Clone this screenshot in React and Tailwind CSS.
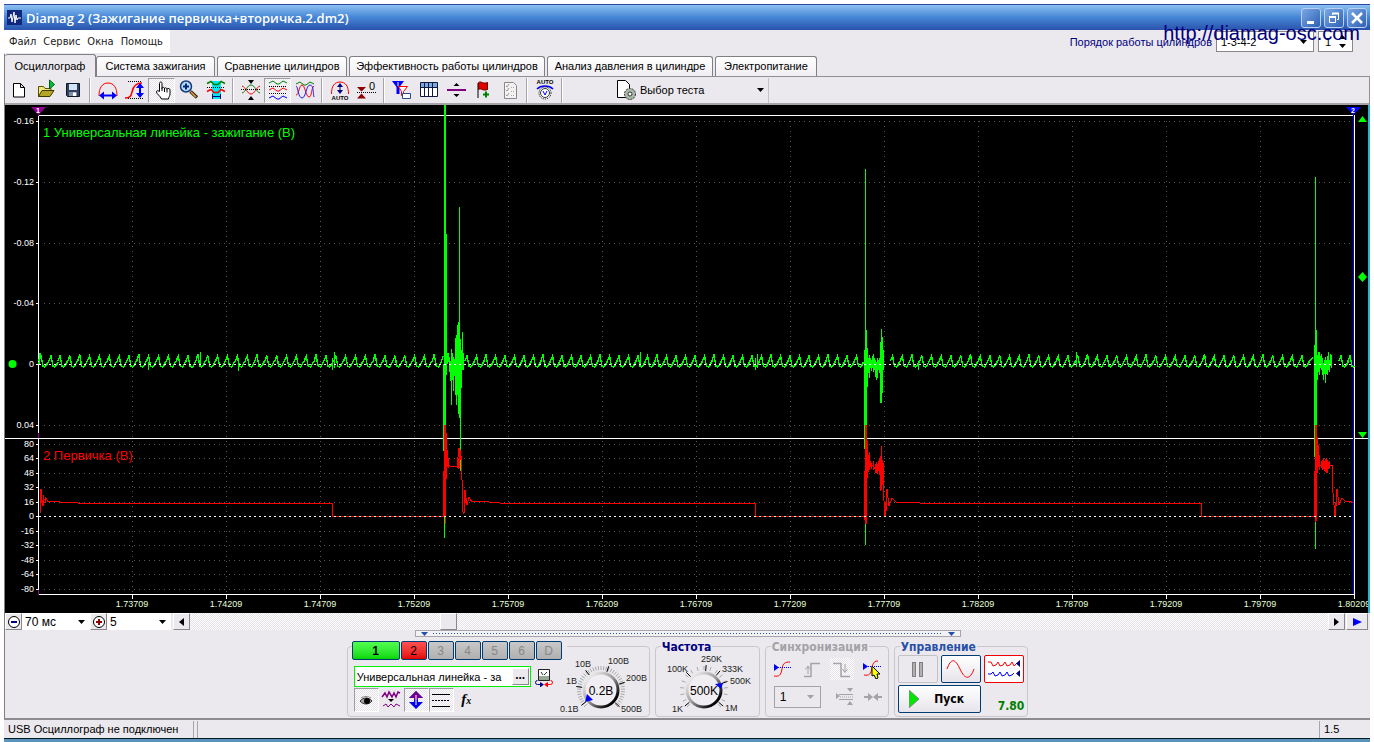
import React from "react";

const UI = "font-['Liberation_Sans',sans-serif]";
const CHECKER =
  "bg-[repeating-conic-gradient(#ffffff_0_25%,#e4e2e8_0_50%)] bg-[length:2px_2px]";

/* ---------- toolbar ---------- */

function Icon({ children, size = 24 }) {
  return (
    <svg width={size} height={size} viewBox={`0 0 ${size} ${size}`} fill="none" aria-hidden="true" className="shrink-0">
      {children}
    </svg>
  );
}

const toolbar = [
  [
    { name: "Новый", icon: <path d="M6.5 5.5h7l4 4v9.500h-11zM13.500 5.500v4h4" fill="#fff" stroke="#000" /> },
    {
      name: "Открыть",
      icon: (
        <>
          <path d="M4.500 18.500v-10h5l1.500 2h6v3" fill="#f4e77a" stroke="#5a5300" />
          <path d="M4.500 18.500l3.500-6h12l-4 6z" fill="#b3a526" stroke="#3d3800" />
          <path d="M15.500 2l5 4.500-5 4.500z" fill="#00c040" stroke="#006010" />
        </>
      ),
    },
    {
      name: "Сохранить",
      icon: (
        <>
          <path d="M5.500 5.500h13v13h-12l-1-1z" fill="#31415f" stroke="#101828" />
          <path d="M8 6h8v6H8z" fill="#d4e4f8" />
          <path d="M8 14h8v4H8z" fill="#8090a8" />
          <path d="M12 14.500h3v3.500h-3z" fill="#fff" />
        </>
      ),
    },
  ],
  [
    {
      name: "Период",
      icon: (
        <>
          <path d="M3 18c0-8 3-13 9-13s9 5 9 13" stroke="#f00" />
          <path d="M5 17.500h14" stroke="#00f" strokeWidth="2" />
          <path d="M3 17.500l5-4v8zM21 17.500l-5-4v8z" fill="#00f" />
        </>
      ),
    },
    {
      name: "Амплитуда",
      icon: (
        <>
          <path d="M2 20c4 0 6-1 7-6s3-9 10-9" stroke="#f00" strokeWidth="1.500" />
          <path d="M5 3.500h14M5 20.500h16" stroke="#000" strokeDasharray="1 1" />
          <path d="M17 7v11" stroke="#00f" strokeWidth="2" />
          <path d="M17 5l-4 5h8zM17 20l-4-5h8z" fill="#00f" />
        </>
      ),
    },
    {
      name: "Рука",
      pressed: true,
      icon: (
        <path
          d="M9.500 13.500v-8c0-2 2.500-2 2.500 0v5c0-2 2.500-1.500 2.500 0.500 0-2 2.500-1.500 2.500 0.500 0-1.500 3-1.500 3 0.500v4c0 2-1.500 3-1.500 5h-7c-1-3-5-5-5-7s2-1.500 3 0M12 10v3M14.500 11v3M17 11.500v3"
          fill="#fff"
          stroke="#000"
        />
      ),
    },
    {
      name: "Лупа",
      icon: (
        <>
          <path d="M13.500 13.500l6.500 6" stroke="#3b2c10" strokeWidth="3.500" />
          <path d="M14 14l5 5" stroke="#d8a040" strokeWidth="1.500" />
          <circle cx="9" cy="8.500" r="5.500" fill="#b8dcff" stroke="#183878" strokeWidth="1.500" />
          <path d="M6 8.500h6M9 5.500v6" stroke="#002878" strokeWidth="2" />
        </>
      ),
    },
    {
      name: "Участок",
      icon: (
        <>
          <path d="M8 3h9v18H8z" fill="#00e8f0" />
          <path d="M3 5.500l4-2 3 3h4l3-3 4 2" stroke="#008000" strokeWidth="1.500" />
          <path d="M3 9.500h18" stroke="#000" strokeDasharray="1 1" />
          <path d="M3 13.500l4-2 3 3h4l3-3 4 2" stroke="#f00" strokeWidth="1.500" />
          <path d="M8.500 16v5M16.500 16v5M9 18.500h7" stroke="#000080" />
        </>
      ),
    },
  ],
  [
    {
      name: "Центрировать",
      icon: (
        <>
          <path d="M3 15c4-1 5-8 9-8s5 7 9 8" stroke="#008000" />
          <path d="M3 8c4 1 5 8 9 8s5-7 9-8" stroke="#f00" />
          <path d="M2 11.500h20" stroke="#000" strokeDasharray="1 1" />
          <path d="M9 2h6l-3 4zM9 22h6l-3-4z" fill="#000" />
        </>
      ),
    },
    {
      name: "Раздельно",
      pressed: true,
      icon: (
        <>
          <path d="M3 5l4-2 4 3h2l4-3 4 2" stroke="#008000" />
          <path d="M3 12l4-2 4 3h2l4-3 4 2" stroke="#f00" />
          <path d="M3 20l4-2 4 3h2l4-3 4 2" stroke="#00f" />
          <path d="M3 8.500h18M3 15.500h18" stroke="#000" strokeDasharray="1 1" />
        </>
      ),
    },
    {
      name: "Вместе",
      icon: (
        <>
          <path d="M3 6l4-2 4 3h2l4-3 4 2" stroke="#008000" />
          <path d="M3 17c3 0 3-10 6-10s4 12 7 12 2-9 5-11" stroke="#f00" />
          <path d="M3 8c2 0 2 12 6 12s4-13 8-13 3 10 4 12" stroke="#22f" />
        </>
      ),
    },
  ],
  [
    {
      name: "Авто амплитуда",
      icon: (
        <>
          <path d="M3.500 16c0-8 3-12 8.500-12s8.500 4 8.500 12" stroke="#f00" />
          <path d="M12 7v7" stroke="#000080" />
          <path d="M12 5l-3 4h6zM12 16l-3-4h6z" fill="#000080" />
          <text x="12" y="22" textAnchor="middle" fontSize="6" fontWeight="700" fill="#000" fontFamily="Liberation Sans, sans-serif">AUTO</text>
        </>
      ),
    },
    {
      name: "Установить ноль",
      icon: (
        <>
          <path d="M2 9h9l-4.500 4.500zM2 20.500h9l-4.500-5z" fill="#900000" />
          <path d="M2 14.500h19" stroke="#000" strokeDasharray="1 1" />
          <text x="14" y="12" fontSize="11" fill="#000" fontFamily="Liberation Sans, sans-serif">0</text>
        </>
      ),
    },
  ],
  [
    {
      name: "Маркеры",
      icon: (
        <>
          <path d="M2 3h12L9.500 9v7h-3V9z" fill="#00f" />
          <path d="M8.500 8.500h9l-4 5v4h-2v-4z" fill="#fff" stroke="#f00" />
          <path d="M12.500 15.500h8v5h-8z" fill="#fff" stroke="#304890" />
          <path d="M8 4v4M14.500 18h4" stroke="#fff" />
        </>
      ),
    },
    {
      name: "Таблица",
      icon: (
        <>
          <path d="M3.500 4.500h17v14h-17z" fill="#fff" stroke="#101840" />
          <path d="M4 5h16v4H4z" fill="#7aa8e0" />
          <path d="M3.500 9.500h17M7.500 5v14M11.500 5v14M15.500 5v14" stroke="#101840" />
        </>
      ),
    },
    {
      name: "Линия",
      icon: (
        <>
          <path d="M3 12h19" stroke="#800080" strokeWidth="2" />
          <path d="M9.500 8h6l-3-3zM9.500 16h6l-3 3z" fill="#000" />
        </>
      ),
    },
    {
      name: "Флаг",
      icon: (
        <>
          <path d="M7 5v15" stroke="#000" />
          <path d="M7.500 4.500c3-2 4 2 9 0v7c-5 2-6-2-9 0z" fill="#e00000" stroke="#700000" />
          <path d="M12 16.500h6M15 13.500v6" stroke="#008000" strokeWidth="2" />
        </>
      ),
    },
    {
      name: "Список",
      icon: (
        <>
          <path d="M6.500 4.500h9l3 3v13h-12z" fill="#f2f2f2" stroke="#888" />
          <path d="M8 8l1 1 2-3M8 12l1 1 2-3M8 17l1 1 2-3" stroke="#999" />
          <path d="M13 9.500h3M13 13.500h3M13 17.500h3" stroke="#aaa" strokeDasharray="1 1" />
        </>
      ),
    },
  ],
  [
    {
      name: "Авто прибор",
      icon: (
        <>
          <text x="12" y="6" textAnchor="middle" fontSize="6" fontWeight="700" fill="#000" fontFamily="Liberation Sans, sans-serif">AUTO</text>
          <path d="M4 11c4-4 12-4 16 0" stroke="#00f" strokeWidth="1.500" />
          <circle cx="12" cy="15" r="6" fill="#fff" stroke="#000" strokeDasharray="1 1" />
          <circle cx="12" cy="15" r="4.500" fill="#fff" stroke="#333" />
          <path d="M10 13l2 4 2-4" stroke="#00f" />
        </>
      ),
    },
  ],
];

const Separator = () => (
  <div className="flex h-[25px] w-2 shrink-0 justify-center">
    <div className="w-[2px] border-r border-white bg-[#a6a4a9]" />
  </div>
);

function ToolButton({ name, pressed, children }) {
  return (
    <button
      type="button"
      aria-label={name}
      aria-pressed={!!pressed}
      className={`flex h-[25px] w-[27px] shrink-0 items-center justify-center ${
        pressed ? `border border-t-[#9d9da1] border-l-[#9d9da1] border-r-white border-b-white ${CHECKER}` : ""
      }`}
    >
      {children}
    </button>
  );
}

/* ---------- chart data ---------- */

function cycles(from, to, step) {
  const peaks = [];
  for (let x = from; x <= to; x += step) peaks.push(x);
  return peaks;
}

function sparkWave(peaks) {
  return (
    "M" +
    peaks
      .map((p, i) => {
        const top = i % 6 === 2 ? 354 : 356;
        return `${p - 2} 361L${p} ${top}L${p + 1} 361L${p + 2} 366L${p + 4} 367L${p + 5} 366L${p + 7} 362`;
      })
      .join("L")
  );
}

const strokes = (list) => list.map(([x, a, b]) => `M${x}.5 ${a}V${b}`).join("");

const greenBase = [
  "M39 364L40 353" + sparkWave([41, 51]).replace("M", "L"),
  sparkWave(cycles(60, 440, 9.85)) + "L443 356",
  sparkWave(cycles(467, 859, 9.5)),
  sparkWave(cycles(892.5, 1308, 9.75)) + "L1313 357",
  sparkWave([1341, 1350]).replace(/L1357 362$/, ""),
].join("");

const greenSpikes = strokes([
  [200, 352, 367], [238, 362, 371], [334, 352, 368], [332, 358, 370], [148, 362, 370],
  [757, 354, 368], [755, 358, 370], [918, 362, 370], [1076, 352, 367], [640, 352, 367],
  [443, 364, 451], [444, 105, 538], [445, 105, 425], [446, 234, 375], [447, 353, 364], [448, 353, 362],
  [449, 357, 372], [450, 361, 381], [451, 349, 405], [452, 353, 380], [453, 357, 391], [454, 359, 376],
  [455, 338, 395], [456, 335, 405], [457, 325, 395], [458, 322, 414], [459, 207, 418], [460, 339, 471],
  [461, 350, 388], [462, 332, 370], [463, 353, 370],
  [864, 350, 449], [865, 169, 545], [866, 330, 425], [867, 348, 387], [868, 358, 373], [869, 355, 378],
  [870, 358, 368], [871, 360, 371], [872, 356, 368], [873, 354, 372], [874, 358, 370], [875, 360, 377],
  [876, 362, 380], [877, 358, 378], [878, 360, 370], [879, 358, 373], [880, 342, 403], [881, 329, 403],
  [882, 337, 393], [883, 350, 370],
  [1314, 345, 457], [1315, 177, 549], [1316, 330, 425], [1317, 355, 380], [1318, 352, 372], [1319, 352, 375],
  [1320, 356, 368], [1321, 354, 370], [1322, 358, 375], [1323, 363, 380], [1324, 360, 374], [1325, 357, 383],
  [1326, 360, 374], [1327, 356, 375], [1328, 352, 370], [1329, 360, 372], [1330, 354, 366], [1331, 355, 368],
]);

const redLine =
  "M40 513V495L41 489L42 500L43 506L44 500L46 498L48 502L52 501L60 502L78 503H332V516H444" +
  "M447 452L448 464L450 466H457L459 448L461 456L462 480L463 512L464 514L465 490L467 505L469 497L472 502L478 501L500 503H755V516H865" +
  "M868 459L870 464L873 466L876 470L880 460L882 462L883 485L885 516L887 489L889 506L892 498L896 502L920 503H1201V516H1315" +
  "M1317 446L1318 460L1320 465H1332L1333 493L1335 516L1337 489L1339 505L1342 498L1346 502L1350 501L1353 503";

const redSpikes = strokes([
  [40, 493, 513], [41, 489, 503], [43, 495, 506], [45, 497, 503],
  [443, 471, 516], [444, 425, 517], [445, 425, 524], [446, 433, 479], [447, 450, 467], [448, 458, 468],
  [457, 461, 468], [458, 458, 469], [459, 448, 468], [460, 450, 470], [461, 456, 480], [464, 501, 510],
  [465, 490, 503],
  [864, 471, 520], [865, 425, 524], [866, 425, 524], [867, 441, 478], [868, 455, 472], [869, 452, 470],
  [870, 461, 467], [871, 463, 469], [873, 461, 470], [875, 464, 473], [876, 462, 473], [877, 464, 474],
  [878, 461, 471], [879, 458, 475], [880, 456, 491], [881, 446, 490], [882, 460, 480], [883, 463, 486],
  [885, 506, 516], [886, 491, 511],
  [1314, 471, 516], [1315, 425, 522], [1316, 425, 521], [1317, 437, 473], [1318, 445, 467], [1319, 455, 470],
  [1321, 461, 468], [1322, 460, 470], [1323, 458, 469], [1324, 461, 471], [1325, 459, 472], [1326, 458, 473],
  [1327, 460, 473], [1328, 462, 469], [1329, 461, 468], [1336, 489, 506],
]);

const topScale = [["-0.16", 121], ["-0.12", 182], ["-0.08", 243], ["-0.04", 303], ["0", 364], ["0.04", 425]];
const bottomScale = [
  ["80", 444], ["64", 458], ["48", 473], ["32", 487], ["16", 502], ["0", 516],
  ["-16", 531], ["-32", 545], ["-48", 560], ["-64", 574], ["-80", 589],
];
const timeScale = [
  "1.73709", "1.74209", "1.74709", "1.75209", "1.75709", "1.76209", "1.76709",
  "1.77209", "1.77709", "1.78209", "1.78709", "1.79209", "1.79709", "1.80209",
];

function Oscillogram() {
  const scale = [...topScale, ...bottomScale];
  return (
    <svg
      viewBox="5 105 1363 508"
      className="block w-full bg-black"
      role="img"
      aria-label="Осциллограмма"
      fill="none"
      fontFamily="Liberation Sans, sans-serif"
    >
      <g shapeRendering="crispEdges">
        <g stroke="#585858" strokeDasharray="1 4">
          {scale.map(([, y], i) => (
            <path key={i} d={`M44 ${y}.5H1353`} />
          ))}
          {timeScale.slice(0, 13).map((t, i) => (
            <path key={t} d={`M${132 + i * 94}.5 121V594`} />
          ))}
        </g>
        <path d="M39 115.500H1355M38.500 115V595M38 594.500H1355M5 438.500H1368M1354.500 115V595" stroke="#fff" />
        <path d="M1353.500 112V594" stroke="#0000ff" />
        <path d="M38.500 112V116M38.500 433V438M38.500 589V595" stroke="#900090" />
        <path d={scale.map(([, y]) => `M36 ${y}.5h3`).join("")} stroke="#fff" />
        <path d={timeScale.map((t, i) => `M${132 + i * 94}.5 595v4`).join("")} stroke="#fff" />
      </g>
      <path d={greenBase} stroke="#00ff00" strokeWidth="1.400" shapeRendering="crispEdges" />
      <path d={greenSpikes} stroke="#00ff00" shapeRendering="crispEdges" />
      <path d={redLine} stroke="#ff0000" shapeRendering="crispEdges" />
      <path d={redSpikes} stroke="#ff0000" shapeRendering="crispEdges" />
      <path d="M460.500 460V471" stroke="#00ff00" />
      <path d="M39 364.500H1353M39 516.500H1353" stroke="#fff" strokeDasharray="2 3" shapeRendering="crispEdges" />

      <g fontSize="9" fill="#fff" textAnchor="end">
        {scale.map(([t, y], i) => (
          <text key={i} x="34" y={y + 3}>{t}</text>
        ))}
      </g>
      <g fontSize="9" fill="#e4ffd8" textAnchor="middle">
        {timeScale.map((t, i) => (
          <text key={t} x={132 + i * 94} y="607">{t}</text>
        ))}
      </g>
      <text x="43" y="137" fontSize="13" fill="#00ff00">1 Универсальная линейка - зажигание (В)</text>
      <text x="43" y="460" fontSize="13" fill="#ff0000">2 Первичка (В)</text>

      <path d="M31 107h15l-7.500 8z" fill="#900090" />
      <text x="38" y="113" fontSize="7" fontWeight="700" fill="#fff" textAnchor="middle">1</text>
      <path d="M1346 107h15l-7.500 8z" fill="#0000ff" />
      <text x="1353" y="113" fontSize="7" fontWeight="700" fill="#fff" textAnchor="middle">2</text>
      <circle cx="12.500" cy="364" r="4" fill="#00ff00" />
      <path d="M1358 122h9l-4.500-6zM1358 432h9l-4.500 6zM1358 277l4.500-5 4.500 5-4.500 5z" fill="#00ff00" />
    </svg>
  );
}

/* ---------- dials ---------- */

function Dial({ id, label, view, width, cx, value, marks, pointer, ticks }) {
  const cy = 690;
  return (
    <div className="shrink-0">
      <input type="range" aria-label={label} min="0" max="5" defaultValue="2" className="sr-only" />
      <svg width={width} height="64" viewBox={view} fill="none" fontFamily="Liberation Sans, sans-serif" aria-hidden="true">
        <defs>
          <linearGradient id={id} x1="0" y1="0" x2="1" y2="1">
            <stop offset="0.150" stopColor="#e6e6e6" />
            <stop offset="0.500" stopColor="#9a9a9a" />
            <stop offset="0.850" stopColor="#000" />
          </linearGradient>
        </defs>
        {Array.from({ length: ticks }, (_, i) => {
          const a = ((135 + (270 * i) / (ticks - 1)) * Math.PI) / 180;
          return (
            <line
              key={i}
              x1={cx + 20 * Math.cos(a)}
              y1={cy + 20 * Math.sin(a)}
              x2={cx + 24 * Math.cos(a)}
              y2={cy + 24 * Math.sin(a)}
              stroke="#a8a8a8"
            />
          );
        })}
        {marks.map(([t, x, y, deg]) => {
          const a = (deg * Math.PI) / 180;
          return (
            <g key={t}>
              <line
                x1={cx + 19 * Math.cos(a)}
                y1={cy + 19 * Math.sin(a)}
                x2={cx + 25 * Math.cos(a)}
                y2={cy + 25 * Math.sin(a)}
                stroke="#000"
              />
              <text x={x} y={y} fontSize="9" fill="#222">{t}</text>
            </g>
          );
        })}
        <circle cx={cx} cy={cy} r="17" fill="#f0eef2" stroke={`url(#${id})`} strokeWidth="3" />
        <path d={pointer} fill="#0000f0" />
        <text x={cx} y={cy + 5} fontSize="12" textAnchor="middle" fill="#000">{value}</text>
      </svg>
    </div>
  );
}

/* ---------- control panel ---------- */

function Group({ title, color, width, children }) {
  return (
    <fieldset className={`h-[77px] shrink-0 rounded border border-[#c9c7cc] px-[3px] ${width}`}>
      <legend className={`ml-[2px] h-[12px] px-px font-['DejaVu_Sans_Condensed',sans-serif] text-[12px] leading-[14px] font-bold ${color}`}>
        {title}
      </legend>
      {children}
    </fieldset>
  );
}

function ChannelButton({ children, look }) {
  return (
    <button
      type="button"
      className={`h-[19px] rounded-[2px] border border-[#003c74] text-center text-[12px] leading-[16px] ${look}`}
    >
      {children}
    </button>
  );
}

const GreyButton = ({ name, checker, children }) => (
  <button type="button" aria-label={name} className={`flex h-[22px] w-[24px] items-center justify-center ${checker ? CHECKER : ""}`}>
    {children}
  </button>
);

const Toggle = ({ name, pressed, children }) => (
  <button
    type="button"
    aria-label={name}
    aria-pressed={!!pressed}
    className={`flex h-[24px] w-[25px] items-center justify-center ${
      pressed ? `border border-t-[#9d9da1] border-l-[#9d9da1] border-r-white border-b-white ${CHECKER}` : ""
    }`}
  >
    {children}
  </button>
);

const Caret = ({ color = "#000", className = "" }) => (
  <svg width="7" height="4" viewBox="0 0 7 4" className={`pointer-events-none shrink-0 ${className}`} aria-hidden="true">
    <path d="M0 0h7L3.500 4z" fill={color} />
  </svg>
);

const tabs = [
  ["Система зажигания", "w-[121px]"],
  ["Сравнение цилиндров", "w-[132px]"],
  ["Эффективность работы цилиндров", "w-[198px]"],
  ["Анализ давления в цилиндре", "w-[168px]"],
  ["Электропитание", "w-[104px]"],
];

const windowButton =
  "flex h-[20px] w-[20px] items-center justify-center rounded-[3px] border border-[#b8d0f4] bg-linear-to-br from-[#7aa8e4] to-[#3060b4]";

const raised = "flex shrink-0 items-center justify-center border border-t-white border-l-white border-r-[#8a888d] border-b-[#8a888d] bg-[#ebe9ed]";

export default function App() {
  return (
    <div className={`min-h-screen bg-white px-[4px] pt-[4px] text-[12px] leading-[14px] text-black ${UI}`}>
      <div className="relative bg-[#ebe9ed]">
        {/* title bar */}
        <header className="flex h-[26px] items-center border-t border-[#2848a0] bg-linear-to-b from-[#8cc0f0] via-[#4585d6] to-[#2a53ac] px-[3px]">
          <svg width="15" height="15" viewBox="0 0 15 15" aria-hidden="true">
            <path d="M0 0h15v15H0z" fill="#10287c" />
            <path d="M1 8h2l1-4 1 8 2-10 1 11 1-8 1 5 1-2h3" stroke="#fff" fill="none" />
          </svg>
          <h1 className="ml-[4px] flex-1 font-['Open_Sans',sans-serif] text-[13px] leading-[16px] font-semibold text-white">
            Diamag 2 (Зажигание первичка+вторичка.2.dm2)
          </h1>
          <div className="flex gap-[3px]">
            <button type="button" aria-label="Свернуть" className={windowButton}>
              <svg width="14" height="14" viewBox="0 0 14 14"><path d="M3 10h7v3H3z" fill="#fff" /></svg>
            </button>
            <button type="button" aria-label="Восстановить" className={windowButton}>
              <svg width="14" height="14" viewBox="0 0 14 14" fill="none" stroke="#fff">
                <path d="M5.500 4V2.500h6v6H10" /><path d="M5 2.500h7M2 6h7" strokeWidth="2" /><path d="M2.500 5.500h6v6h-6z" />
              </svg>
            </button>
            <button type="button" aria-label="Закрыть" className={windowButton}>
              <svg width="14" height="14" viewBox="0 0 14 14"><path d="M2 2l10 10M12 2L2 12" stroke="#fff" strokeWidth="2.500" /></svg>
            </button>
          </div>
        </header>

        {/* menu */}
        <div className="flex h-[24px] items-start justify-between pr-[17px]">
          <nav className="flex h-[23px] w-[166px] items-center gap-[7px] bg-white pl-[5px] font-['DejaVu_Sans_Condensed',sans-serif] text-[11px] text-[#222]">
            <a href="#file">Файл</a>
            <a href="#service">Сервис</a>
            <a href="#windows">Окна</a>
            <a href="#help">Помощь</a>
          </nav>
          <div className="flex items-center gap-[4px] pt-[1px] text-[11px]">
            <label htmlFor="order" className="text-[#000080]">Порядок работы цилиндров</label>
            <div className="flex h-[21px] w-[98px] items-center border border-[#888] bg-white pr-[6px]">
              <select id="order" className="min-w-0 flex-1 appearance-none pl-[4px]">
                <option>1-3-4-2</option>
              </select>
              <Caret />
            </div>
            <div className="flex h-[21px] w-[35px] items-center border border-[#888] bg-white pr-[6px]">
              <input aria-label="Цилиндр" defaultValue="1" className="w-0 min-w-0 flex-1 pl-[6px]" />
              <div className="flex flex-col gap-[5px]">
                <Caret className="rotate-180" />
                <Caret />
              </div>
            </div>
          </div>
        </div>
        <a href="http://diamag-osc.com" className="absolute top-[17px] right-[10px] text-[20px] leading-[24px] text-[#000080]">
          http://diamag-osc.com
        </a>

        <main className="border-l border-[#808080]">
          {/* tabs */}
          <div role="tablist" className="flex h-[23px] items-end border-b border-[#909094] text-[11px] whitespace-nowrap">
            <button type="button" role="tab" aria-selected="true" className="-mb-px h-[23px] w-[91px] shrink-0 rounded-t-[3px] border border-b-0 border-l-0 border-[#808084] bg-[#ebe9ed] leading-[20px]">
              Осциллограф
            </button>
            {tabs.map(([t, w]) => (
              <button key={t} type="button" role="tab" aria-selected="false" className={`h-[20px] shrink-0 pr-[2px] leading-[18px] ${w}`}>
                <span className="block h-[20px] rounded-t-[3px] border border-b-0 border-[#808084] bg-linear-to-b from-white to-[#f0eef2]">
                  {t}
                </span>
              </button>
            ))}
          </div>

          {/* toolbar */}
          <div className="flex h-[28px] items-center border-r border-b-2 border-r-[#909094] border-b-[#a6a4a9]" role="toolbar">
            {toolbar.map((group, i) => (
              <React.Fragment key={i}>
                {group.map((b) => (
                  <ToolButton key={b.name} name={b.name} pressed={b.pressed}>
                    <Icon>{b.icon}</Icon>
                  </ToolButton>
                ))}
                <Separator />
              </React.Fragment>
            ))}
            <button type="button" className="ml-[48px] flex h-[25px] w-[154px] items-center text-left text-[11px]">
              <Icon>
                <path d="M3.500 2.500h8l4 4v13h-12z" fill="#fff" stroke="#000" />
                <circle cx="16" cy="16" r="5.500" fill="#a8b8a8" stroke="#333" strokeDasharray="2 1" />
                <circle cx="16" cy="16" r="2" fill="#fff" stroke="#333" />
              </Icon>
              <span className="ml-[2px] flex-1">Выбор теста</span>
              <Caret className="mr-[4px]" />
            </button>
            <div className="h-[25px] w-px bg-[#c4c2c6]" />
          </div>

          <div className="border-r-2 border-[#30b0d0]">
            <Oscillogram />
          </div>

          {/* scroll row */}
          <div className="flex h-[17px] items-stretch">
            <button type="button" aria-label="Уменьшить" className={`w-[17px] ${raised}`}>
              <svg width="14" height="14" viewBox="0 0 14 14" fill="none"><circle cx="7" cy="7" r="5.500" fill="#fff" stroke="#000" /><path d="M4 7h6" stroke="#000080" strokeWidth="2" /></svg>
            </button>
            <div className="flex w-[68px] items-center bg-white pr-[5px]">
              <select aria-label="Развёртка" className="min-w-0 flex-1 appearance-none pl-[3px]"><option>70 мс</option></select>
              <Caret />
            </div>
            <button type="button" aria-label="Увеличить" className={`w-[17px] ${raised}`}>
              <svg width="14" height="14" viewBox="0 0 14 14" fill="none"><circle cx="7" cy="7" r="5.500" fill="#fff" stroke="#000" /><path d="M4 7h6M7 4v6" stroke="#900000" strokeWidth="2" /></svg>
            </button>
            <div className="flex w-[64px] items-center bg-white pr-[5px]">
              <select aria-label="Усиление" className="min-w-0 flex-1 appearance-none pl-[3px]"><option>5</option></select>
              <Caret />
            </div>
            <button type="button" aria-label="Влево" className={`ml-[2px] w-[17px] ${raised}`}>
              <svg width="5" height="8" viewBox="0 0 5 8"><path d="M5 0v8L0 4z" fill="#000" /></svg>
            </button>
            <div className={`flex flex-1 ${CHECKER}`}>
              <div className="w-[22%]" />
              <div className={`w-[17px] ${raised}`} />
            </div>
            <button type="button" aria-label="Вправо" className={`w-[17px] ${raised}`}>
              <svg width="5" height="8" viewBox="0 0 5 8"><path d="M0 0v8l5-4z" fill="#000" /></svg>
            </button>
            <button type="button" aria-label="Воспроизвести" className={`ml-[1px] mr-[2px] w-[22px] ${raised}`}>
              <svg width="9" height="8" viewBox="0 0 9 8"><path d="M0 0v8l9-4z" fill="#00f" /></svg>
            </button>
          </div>

          {/* splitter */}
          <div className="mx-auto flex h-[7px] w-[40%] items-center gap-[5px] border border-[#a8a6ab] bg-[#f2f1f4] px-[5px]">
            <Caret color="#2050a8" />
            <div className="h-px flex-1 bg-[repeating-linear-gradient(to_right,#2050a8_0_1px,transparent_1px_3px)]" />
            <Caret color="#2050a8" />
          </div>

          {/* control panel */}
          <section className="flex h-[81px] justify-center gap-[5px] pt-[3px]">
            <fieldset className="h-[77px] w-[303px] shrink-0 rounded border border-[#c9c7cc] pl-[4px]">
              <legend className="flex h-[12px] items-start gap-px pt-px pr-[5px]">
                <ChannelButton look="w-[48px] bg-linear-to-b from-[#50ff50] to-[#00d800] font-bold">1</ChannelButton>
                <ChannelButton look="w-[26px] bg-linear-to-b from-[#ff5050] to-[#e00000]">2</ChannelButton>
                {["3", "4", "5", "6", "D"].map((c) => (
                  <ChannelButton key={c} look="w-[26px] bg-linear-to-b from-[#c8c8c8] to-[#b0b0b0] text-[#888]">{c}</ChannelButton>
                ))}
              </legend>
              <div className="flex">
                <div className="w-[202px] shrink-0 pt-[14px] pl-[2px]">
                  <div className="flex items-center gap-[3px]">
                    <div className="flex h-[21px] w-[177px] items-center border border-[#00f000] bg-white pr-px">
                      <input aria-label="Название канала" defaultValue="Универсальная линейка - за" className="w-0 min-w-0 flex-1 pl-[2px] text-[11px]" />
                      <button type="button" className={`h-[17px] w-[17px] pb-[4px] leading-[8px] font-bold ${raised}`}>...</button>
                    </div>
                    <button type="button" aria-label="Датчик">
                      <Icon size={20}>
                        <path d="M4.500 2.500h11v11h-11z" fill="#fff" stroke="#222" />
                        <path d="M5 9h10v4H5z" fill="#98a898" />
                        <path d="M7 5l2 3M10 8l3-3" stroke="#333" />
                        <path d="M7 17.500H3.500a2 2 0 0 1 0-4" stroke="#000080" />
                        <path d="M6 15l4 2.500-4 3z" fill="#000080" />
                        <path d="M13 17.500h3.500a2 2 0 0 0 0-4" stroke="#f00" />
                        <path d="M14 15l-4 2.500 4 3z" fill="#f00" />
                      </Icon>
                    </button>
                  </div>
                  <div className="flex pt-px">
                    <Toggle name="Видимость" pressed>
                      <Icon size={20}>
                        <path d="M4 11c3-4 9-4 12 0-3 4-9 4-12 0z" fill="#a8a098" stroke="#333" />
                        <circle cx="11" cy="11" r="3" fill="#000" />
                        <path d="M5 8c3-2 7-2 10 0" stroke="#888" />
                      </Icon>
                    </Toggle>
                    <Toggle name="Фильтр">
                      <Icon size={20}>
                        <path d="M1 7l3-4 2 4 2-5 3 5 2-4 2 4 2-5 2 1" stroke="#800080" strokeWidth="1.500" />
                        <path d="M7 9h6l-3 3z" fill="#000" />
                        <path d="M2 16l3-2 2 3 3-3 3 3 2-3 4 2" stroke="#800080" />
                      </Icon>
                    </Toggle>
                    <Toggle name="Инверсия" pressed>
                      <Icon size={20}>
                        <path d="M10 1L3 8h5v4H3l7 7 7-7h-5V8h5z" fill="#0000f0" />
                        <path d="M10 1L3 8h5v2h4V8h5z" fill="#700090" />
                        <path d="M10 5v10" stroke="#fff" />
                      </Icon>
                    </Toggle>
                    <Toggle name="Уровни" pressed>
                      <Icon size={20}>
                        <path d="M1 4.500h18M1 16.500h18" stroke="#000" />
                        <path d="M1 10.500h18" stroke="#000" strokeDasharray="2 1" />
                      </Icon>
                    </Toggle>
                    <Toggle name="Функция">
                      <span className="font-['Liberation_Serif',serif] text-[15px] font-bold italic">f<span className="text-[10px]">x</span></span>
                    </Toggle>
                  </div>
                </div>
                <Dial
                  id="volt-knob"
                  label="Напряжение"
                  width={94}
                  view="554 652 94 64"
                  cx={601}
                  value="0.2В"
                  ticks={41}
                  pointer="M585 702l2-8 6 6z"
                  marks={[
                    ["0.1В", 560, 712, 142], ["1В", 566, 684, 188], ["10В", 575, 667, 232],
                    ["100В", 608, 664, 288], ["200В", 626, 681, 342], ["500В", 621, 712, 42],
                  ]}
                />
              </div>
            </fieldset>

            <Group title="Частота" color="text-[#000080]" width="w-[105px]">
              <Dial
                id="freq-knob"
                label="Частота"
                width={95}
                view="659 652 95 64"
                cx={704}
                value="500K"
                ticks={17}
                pointer="M715 684l8-1-2 6z"
                marks={[
                  ["1K", 672, 712, 140], ["100K", 667, 672, 225], ["250K", 701, 662, 275],
                  ["333K", 722, 672, 310], ["500K", 730, 684, 340], ["1M", 725, 711, 40],
                ]}
              />
            </Group>

            <Group title="Синхронизация" color="text-[#a4a2a6]" width="w-[124px]">
              <div className="flex justify-between px-px pt-[6px]">
                <GreyButton name="Синхронизация по каналу">
                  <Icon size={20}>
                    <path d="M2 17c5 1 7-1 8-7s3-7 8-7" stroke="#f00" />
                    <path d="M2 8.500h17" stroke="#00f" strokeDasharray="1 1" />
                    <path d="M2 5v7l5-3.500z" fill="#00f" />
                  </Icon>
                </GreyButton>
                <GreyButton name="Передний фронт">
                  <Icon size={20}>
                    <path d="M2 17.500h7v-13h9" stroke="#a4a2a6" strokeWidth="1.500" />
                    <path d="M6 15V8M3.500 10.500L6 7l2.500 3.500" stroke="#a4a2a6" />
                  </Icon>
                </GreyButton>
                <GreyButton name="Задний фронт" checker>
                  <Icon size={20}>
                    <path d="M1 4.500h8v13h9" stroke="#a4a2a6" strokeWidth="1.500" />
                    <path d="M13 5v8M10.500 10l2.500 3.500 2.500-3.500" stroke="#a4a2a6" />
                  </Icon>
                </GreyButton>
                <GreyButton name="Указать уровень">
                  <Icon size={20}>
                    <path d="M2 16c5 1 7-1 8-7s3-7 6-7" stroke="#f00" />
                    <path d="M2 7.500h17" stroke="#00f" strokeDasharray="1 1" />
                    <path d="M1 4v7l5-3.500z" fill="#00f" />
                    <path d="M10 7v10l2-1 2 4 2-1-1-4h3z" fill="#ff0" stroke="#000" />
                  </Icon>
                </GreyButton>
              </div>
              <div className="flex items-center justify-between pt-[6px] pl-[5px]">
                <div className="mr-auto flex h-[22px] w-[47px] items-center border border-[#a4a2a6] pr-[6px]">
                  <select aria-label="Канал синхронизации" className="min-w-0 flex-1 appearance-none pl-[5px]"><option>1</option></select>
                  <Caret color="#a4a2a6" />
                </div>
                <GreyButton name="Окно уровня">
                  <Icon size={20}>
                    <path d="M12 1h6l-3 4zM12 18h6l-3-4zM1 6v6l4-3z" fill="#a4a2a6" />
                    <path d="M4 7.500h14M4 12.500h14" stroke="#a4a2a6" />
                    <path d="M5 10h13" stroke="#a4a2a6" strokeDasharray="1 1" />
                  </Icon>
                </GreyButton>
                <div className="w-[4px]" />
                <GreyButton name="Сжать">
                  <Icon size={20}>
                    <path d="M1 10h5M14 10h5" stroke="#a4a2a6" strokeWidth="2" />
                    <path d="M5 6v8l5-4zM15 6v8l-5-4z" fill="#a4a2a6" />
                  </Icon>
                </GreyButton>
              </div>
            </Group>

            <Group title="Управление" color="text-[#2850a8]" width="w-[134px]">
              <div className="flex gap-[3px] pt-[3px]">
                <button type="button" aria-label="Пауза" className="flex h-[28px] w-[40px] items-center justify-center gap-[3px] rounded-[2px] border border-[#c4c2c6]">
                  <span className="h-[15px] w-[4px] border border-[#808080] bg-[#b0b0b0]" />
                  <span className="h-[15px] w-[4px] border border-[#808080] bg-[#b0b0b0]" />
                </button>
                <button type="button" aria-label="Однократно" className="flex h-[28px] w-[40px] items-center justify-center rounded-[2px] border border-[#003c74] bg-linear-to-b from-white to-[#e6e4ea]">
                  <svg width="32" height="22" viewBox="0 0 32 22" fill="none"><path d="M2 11C6 0 10 0 15 11s10 11 14 0" stroke="#f00" /></svg>
                </button>
                <button type="button" aria-label="Непрерывно" className="flex h-[28px] w-[40px] items-center justify-center rounded-[2px] border border-[#f00000] bg-white">
                  <svg width="34" height="22" viewBox="0 0 34 22" fill="none">
                    <path d="M1 4h3l2 4 3-1 2-3 2 4 3-1 2-3 2 4 3-1 2-3 2 4 3-3" stroke="#f00" />
                    <path d="M1 16h3l2-2 2 4 3-1 2-3 2 4 3-1 2-3 2 4 3-1 2-2" stroke="#00f" />
                    <path d="M33 2v7l-4-3.500zM33 12v7l-4-3.500z" fill="#000080" />
                  </svg>
                </button>
              </div>
              <div className="flex items-end gap-[17px] pt-[2px]">
                <button type="button" className="flex h-[28px] w-[83px] items-center rounded-[2px] border border-[#003c74] bg-linear-to-b from-white to-[#e6e4ea] pl-[10px] font-['DejaVu_Sans_Condensed',sans-serif] font-bold">
                  <svg width="10" height="18" viewBox="0 0 10 18"><path d="M0 0v18l10-9z" fill="#00e800" stroke="#888" /></svg>
                  <span className="flex-1 text-center">Пуск</span>
                </button>
                <output className="font-['DejaVu_Sans_Condensed',sans-serif] font-bold text-[#008000]">7.80</output>
              </div>
            </Group>
          </section>
        </main>

        {/* status bar */}
        <footer className="flex h-[20px] items-stretch border-t-2 border-[#8e8c91] px-[2px] pt-px text-[11px] leading-[17px]">
          <span className="w-[188px] border-r border-[#a8a6ab] pl-[2px]">USB Осциллограф не подключен</span>
          <span className="ml-[3px] flex-1 border-x border-[#a8a6ab]" />
          <span className="ml-[2px] w-[46px] pl-[2px]">1.5</span>
        </footer>
        <div className="h-[4px] border-t border-[#002020] bg-[#5b93bd]" />
      </div>
    </div>
  );
}
